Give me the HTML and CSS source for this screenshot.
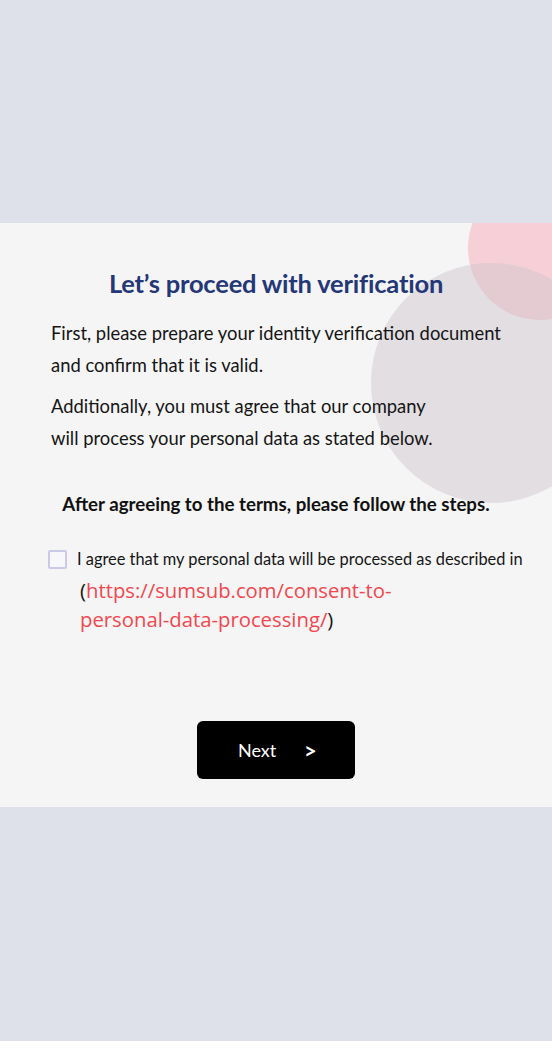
FILE: index.html
```html
<!DOCTYPE html>
<html lang="en">
<head>
<meta charset="utf-8">
<title>Verification</title>
<link rel="stylesheet" href="styles.css">
</head>
<body>
<div class="page">
  <section class="card">
    <div class="circle circle-pink"></div>
    <div class="circle circle-grey"></div>
    <div class="content">
      <h1 class="title">Let’s proceed with verification</h1>
      <p class="text">First, please prepare your identity verification document<br>and confirm that it is valid.</p>
      <p class="text text-second">Additionally, you must agree that our company<br>will process your personal data as stated below.</p>
      <p class="steps">After agreeing to the terms, please follow the steps.</p>
      <label class="agree">
        <span class="checkbox"></span>
        <span class="agree-text">I agree that my personal data will be processed as described in
          <span class="link-line">(<a class="link" href="#">https://sumsub.com/consent-to-<br>personal-data-processing/</a>)</span>
        </span>
      </label>
      <div class="actions">
        <button class="next" type="button"><span class="next-label">Next</span><span class="next-arrow">&gt;</span></button>
      </div>
    </div>
  </section>
</div>
</body>
</html>
```
FILE: styles.css
```css
html, body {
  margin: 0;
  padding: 0;
  background: #ffffff;
}
.page {
  height: 1041px;
  background: #dee1ea;
  padding-top: 223px;
  box-sizing: border-box;
}
.card {
  position: relative;
  height: 584px;
  background: #f5f5f5;
  overflow: hidden;
}
.circle {
  position: absolute;
  border-radius: 50%;
}
.circle-pink {
  width: 144px;
  height: 144px;
  left: 468px;
  top: -47px;
  background: #f7cfd6;
}
.circle-grey {
  width: 240px;
  height: 240px;
  left: 371px;
  top: 40px;
  background: rgba(205, 196, 205, 0.45);
}
.content {
  position: relative;
  padding: 44px 0 0 0;
  font-family: Lato, "Open Sans", sans-serif;
  color: #151515;
}
.title {
  margin: 0;
  text-align: center;
  font-size: 25.5px;
  line-height: 32px;
  font-weight: 700;
  color: #243777;
  letter-spacing: -0.2px;
}
.text {
  margin: 18px 0 0 51px;
  font-size: 18.4px;
  line-height: 32px;
}
.text-second {
  margin-top: 9px;
}
.steps {
  margin: 34px 0 0 0;
  text-align: center;
  font-size: 18.7px;
  line-height: 32px;
  font-weight: 700;
  color: #111111;
}
.agree {
  display: flex;
  gap: 10px;
  margin: 24px 0 0 48px;
  font-size: 16.4px;
  line-height: 30px;
}
.checkbox {
  flex: none;
  width: 15px;
  height: 15px;
  margin-top: 6px;
  border: 2px solid #cbcae6;
  border-radius: 2px;
  background: #f7f7fb;
}
.agree-text {
  display: block;
}
.link-line {
  display: block;
  padding-left: 3px;
  font-family: "Open Sans", sans-serif;
  font-size: 20.3px;
  line-height: 29px;
  margin-top: 2px;
}
.link {
  color: #f2474f;
  text-decoration: none;
}
.actions {
  display: flex;
  justify-content: center;
  margin-top: 87px;
}
.next {
  display: flex;
  align-items: center;
  width: 158px;
  height: 58px;
  padding: 0 0 0 41px;
  border: none;
  border-radius: 6px;
  background: #000000;
  color: #ffffff;
  font-family: Lato, sans-serif;
  font-size: 18px;
  cursor: pointer;
}
.next-label {
  width: 66px;
  text-align: left;
}
.next-arrow {
  font-weight: 700;
  font-size: 22px;
}
```
